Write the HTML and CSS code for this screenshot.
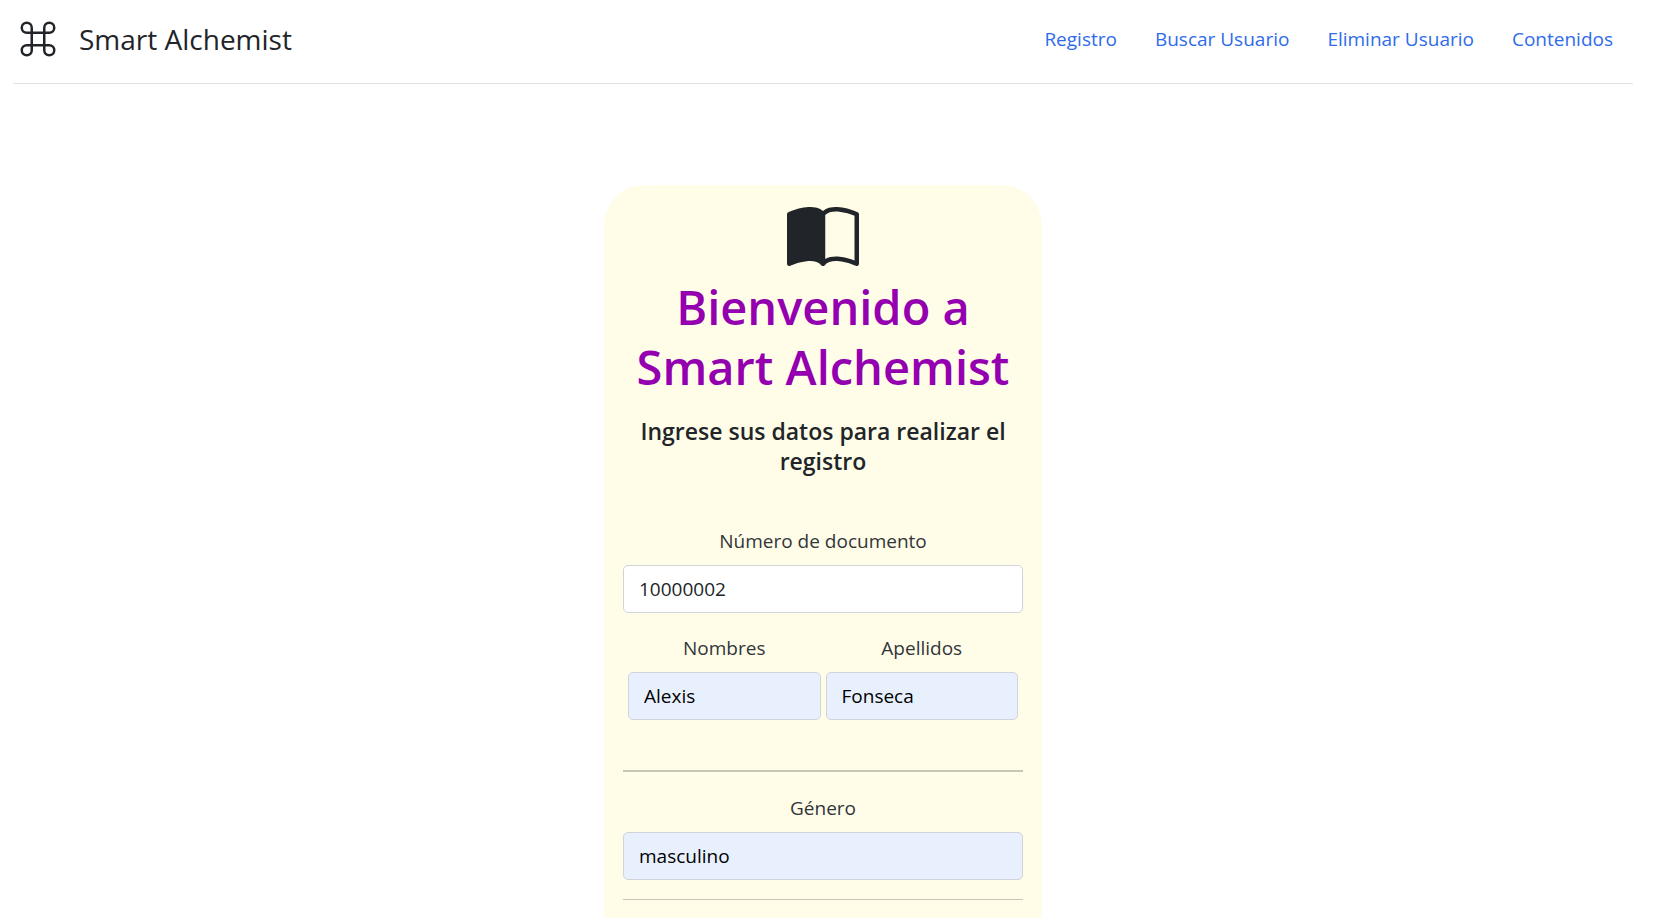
FILE: index.html
```html
<!DOCTYPE html>
<html lang="es">
<head>
<meta charset="utf-8">
<meta name="viewport" content="width=device-width, initial-scale=1">
<title>Smart Alchemist</title>
<link rel="stylesheet" href="styles.css">
</head>
<body>
<header class="site-header">
  <a class="brand" href="#">
    <svg class="brand-icon" viewBox="0 0 16 16" fill="currentColor" aria-hidden="true"><path d="M3.5 2A1.5 1.5 0 0 1 5 3.500V5H3.500a1.500 1.500 0 1 1 0-3zM6 5V3.500A2.500 2.500 0 1 0 3.500 6H5v4H3.500A2.500 2.500 0 1 0 6 12.500V11h4v1.500a2.500 2.500 0 1 0 2.500-2.500H11V6h1.500A2.500 2.500 0 1 0 10 3.500V5H6zm4 1v4H6V6h4zm1-1V3.500A1.500 1.500 0 1 1 12.500 5H11zm0 6h1.500a1.500 1.500 0 1 1-1.500 1.500V11zm-6 0v1.500A1.500 1.500 0 1 1 3.500 11H5z"/></svg>
    <span class="brand-name">Smart Alchemist</span>
  </a>
  <nav class="site-nav">
    <a class="nav-link" href="#registro">Registro</a>
    <a class="nav-link" href="#buscar">Buscar Usuario</a>
    <a class="nav-link" href="#eliminar">Eliminar Usuario</a>
    <a class="nav-link" href="#contenidos">Contenidos</a>
  </nav>
</header>
<main class="page" id="registro">
  <form class="card">
    <svg class="card-icon" viewBox="0 0 16 16" fill="currentColor" aria-hidden="true"><path d="M8.5 2.687c.654-.689 1.782-.886 3.112-.752 1.234.124 2.503.523 3.388.893v9.923c-.918-.35-2.107-.692-3.287-.81-1.094-.111-2.278-.039-3.213.492V2.687zM8 1.783C7.015.936 5.587.81 4.287.94c-1.514.153-3.042.672-3.994 1.105A.5.5 0 0 0 0 2.5v11a.5.5 0 0 0 .707.455c.882-.4 2.303-.881 3.68-1.020 1.409-.142 2.590.087 3.223.877a.5.5 0 0 0 .78 0c.633-.79 1.814-1.019 3.222-.877 1.378.139 2.800.620 3.681 1.020A.5.5 0 0 0 16 13.500v-11a.5.5 0 0 0-.293-.455c-.952-.433-2.480-.952-3.994-1.105C10.413.809 8.985.936 8 1.783z"/></svg>
    <h1 class="card-title">Bienvenido a Smart Alchemist</h1>
    <h2 class="card-subtitle">Ingrese sus datos para realizar el registro</h2>
    <div class="field">
      <label class="field-label" for="documento">Número de documento</label>
      <input class="field-input" id="documento" type="text" value="10000002">
    </div>
    <div class="field-row">
      <div class="field">
        <label class="field-label" for="nombres">Nombres</label>
        <input class="field-input filled" id="nombres" type="text" value="Alexis">
      </div>
      <div class="field">
        <label class="field-label" for="apellidos">Apellidos</label>
        <input class="field-input filled" id="apellidos" type="text" value="Fonseca">
      </div>
    </div>
    <hr class="rule rule-section">
    <div class="field">
      <label class="field-label" for="genero">Género</label>
      <input class="field-input filled" id="genero" type="text" value="masculino">
    </div>
    <hr class="rule">
  </form>
</main>
</body>
</html>
```
FILE: styles.css
```css
* {
  box-sizing: border-box;
}

body {
  margin: 0;
  padding: 0 26px 0 13px;
  background: #fff;
  color: #212529;
  font-family: "Segoe UI", "Open Sans", "Noto Sans", sans-serif;
  font-size: 19px;
  line-height: 30px;
}

.site-header {
  display: flex;
  align-items: center;
  justify-content: space-between;
  height: 84px;
  padding: 0 20px 6px 5px;
  border-bottom: 1px solid #dee2e6;
}

.brand {
  display: flex;
  align-items: center;
  gap: 21px;
  color: inherit;
  text-decoration: none;
}

.brand-icon {
  width: 40px;
  height: 40px;
}

.brand-name {
  font-size: 28px;
  line-height: 40px;
}

.site-nav {
  display: flex;
  gap: 38px;
}

.nav-link {
  color: #2f6bea;
  text-decoration: none;
}

.page {
  display: flex;
  justify-content: center;
  padding-top: 101px;
}

.card {
  width: 100%;
  max-width: 438px;
  padding: 18px 19px 0;
  border-radius: 40px 40px 0 0;
  background: #fffde8;
  text-align: center;
}

.card-icon {
  display: block;
  width: 72px;
  height: 72px;
  margin: 0 auto 2px;
}

.card-title {
  margin: 0 0 19px;
  color: #9400b0;
  font-size: 47px;
  font-weight: 600;
  line-height: 60px;
}

.card-subtitle {
  margin: 0 0 50px;
  font-size: 23px;
  font-weight: 600;
  line-height: 30px;
}

.field {
  display: flex;
  flex: 1;
  flex-direction: column;
  gap: 9px;
}

.field-row {
  display: flex;
  gap: 5px;
  margin: 20px 5px 50px;
}

.field-label {
  color: #32353a;
}

.field-input {
  width: 100%;
  min-width: 0;
  height: 48px;
  padding: 0 15px;
  border: 1px solid #ced4da;
  border-radius: 5px;
  background: #fff;
  color: #212529;
  font: inherit;
}

.filled {
  background: #e8f0fe;
  color: #000;
}

.rule {
  height: 1px;
  margin: 19px 0;
  border: 0;
  background: #c8c7b7;
}

.rule-section {
  height: 2px;
  margin-bottom: 21px;
}
```
